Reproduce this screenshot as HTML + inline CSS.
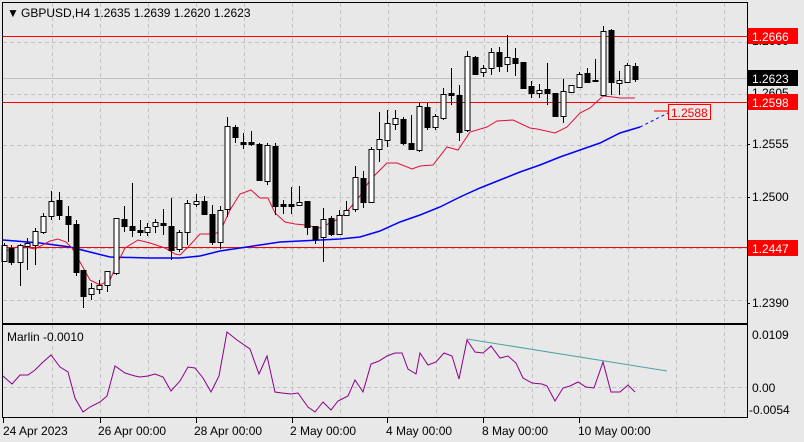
<!DOCTYPE html>
<html><head><meta charset="utf-8"><style>
html,body{margin:0;padding:0;background:#e8e8e8;}
svg{display:block;font-family:"Liberation Sans",sans-serif;}
</style></head><body>
<svg id="s" width="804" height="442" xmlns="http://www.w3.org/2000/svg">
<rect width="804" height="442" fill="#e8e8e8"/>
<g id="grid" stroke="#c4c4c4" stroke-dasharray="4,3" stroke-width="1"></g>
<line x1="3" y1="78.5" x2="747" y2="78.5" stroke="#c0c0c0"/>
<line x1="3" y1="36.5" x2="747" y2="36.5" stroke="#ff0000"/>
<line x1="3" y1="102.5" x2="747" y2="102.5" stroke="#ff0000"/>
<line x1="3" y1="247.5" x2="747" y2="247.5" stroke="#ff0000"/>
<polyline fill="none" stroke="#0000ff" stroke-width="1.5" points="3,240 40,243 70,247 90,252 110,257 150,258 180,258 200,256 220,251 240,248 260,245 280,242 300,241 320,240 340,239 360,237 380,231 400,222 420,215 440,207 460,197 480,188 500,180 520,172 540,165 560,157 580,150 600,143 620,133 640,127"/>
<polyline fill="none" stroke="#0000ff" stroke-width="1" stroke-dasharray="3,3" points="640,127 668,113"/>
<polyline fill="none" stroke="#e0103a" stroke-width="1" points="3,252 20,246 35,249 50,241 58,239 66,242 72,248 80,262 90,280 100,285 110,280 118,262 125,248 138,240 150,243 165,248 175,254 180,255 190,245 200,234 213,234 220,232 230,210 240,194 251,190 260,198 268,198 275,213 285,222 295,224 305,225 315,227 320,228 330,223 340,218 350,208 360,196 370,180 380,170 387,163 397,163 412,169 420,166 433,165 447,147 458,150 470,132 487,127 497,121 513,120 530,128 537,129 555,133 567,127 580,113 590,108 603,96 613,97 620,98 635,98"/>
<g id="c"></g>
<polyline fill="none" stroke="#ff0000" points="654,111 668,111"/>
<rect x="668.5" y="104.5" width="42" height="15" fill="#e8e8e8" stroke="#ff0000"/>
<text x="671" y="117" font-size="12" fill="#ff0000">1.2588</text>
<rect x="2.5" y="2.5" width="745" height="321" fill="none" stroke="#000"/>
<text x="7" y="17" font-size="12">&#9660;</text>
<text x="21" y="17" font-size="12" fill="#000">GBPUSD,H4  1.2635 1.2639 1.2620 1.2623</text>
<g font-size="12" fill="#000">
<text x="752" y="97">1.2605</text>
<text x="752" y="45">1.2660</text>
<text x="752" y="148">1.2555</text>
<text x="752" y="201">1.2500</text>
<text x="752" y="307">1.2390</text>
</g>
<rect x="748" y="28" width="50" height="16" fill="#ff0000"/>
<text x="752" y="41" font-size="12" fill="#fff">1.2666</text>
<rect x="748" y="70" width="50" height="16" fill="#000"/>
<text x="752" y="83" font-size="12" fill="#fff">1.2623</text>
<rect x="748" y="94" width="50" height="16" fill="#ff0000"/>
<text x="752" y="107" font-size="12" fill="#fff">1.2598</text>
<rect x="748" y="240" width="50" height="16" fill="#ff0000"/>
<text x="752" y="253" font-size="12" fill="#fff">1.2447</text>
<g stroke="#000"><line x1="747" y1="144.5" x2="750" y2="144.5"/><line x1="747" y1="197.5" x2="750" y2="197.5"/><line x1="747" y1="303.5" x2="750" y2="303.5"/></g>
<line x1="3" y1="387.5" x2="747" y2="387.5" stroke="#c4c4c4" stroke-dasharray="4,3"/>
<polyline fill="none" stroke="#4aa3a0" stroke-width="1" points="467,339 667,371"/>
<polyline fill="none" stroke="#8b008b" stroke-width="1" points="3,376 12,384 20,375 28,375 35,370 42,363 51,355 60,367 68,372 75,398 83,412 90,407 100,402 107,396 115,366 125,373 135,376 140,377 148,376 155,374 163,377 171,391 180,381 188,367 195,368 203,378 211,392 219,376 227,332 237,340 250,349 259,374 267,356 275,392 282,393 291,394 298,393 308,407 315,412 323,402 331,410 338,401 348,396 355,380 363,392 371,364 379,361 387,356 395,353 402,353 408,369 416,374 420,353 428,365 436,362 444,353 452,356 459,379 467,340 475,352 483,353 491,346 500,358 508,356 516,363 523,378 532,383 542,384 547,386 555,401 563,388 570,386 578,382 586,387 594,388 603,362 611,392 620,392 628,385 635,392"/>
<rect x="2.5" y="324.5" width="745" height="93" fill="none" stroke="#000"/>
<text x="7" y="341" font-size="12">Marlin -0.0010</text>
<g font-size="12"><text x="752" y="339">0.0109</text><text x="752" y="392">0.00</text><text x="749" y="414">-0.0054</text></g>
<g font-size="12" id="dates"></g>
</svg>
<script>
var NS="http://www.w3.org/2000/svg";
function el(p,t,a){var e=document.createElementNS(NS,t);for(var k in a)e.setAttribute(k,a[k]);p.appendChild(e);return e;}
var g=document.getElementById("grid");
for(var x=52;x<747;x+=48){el(g,"line",{x1:x+.5,y1:3,x2:x+.5,y2:323});el(g,"line",{x1:x+.5,y1:325,x2:x+.5,y2:417});}
[42,93.5,145,196.5,248,299.5].forEach(function(y){el(g,"line",{x1:3,y1:Math.round(y)+.5,x2:747,y2:Math.round(y)+.5});});
// x, wickTop, wickBot, bodyTop, bodyBot, bull
var C=[[4,243,262,245,261,1],[11,245,265,248,262,0],[20,244,286,245,262,1],[27,238,270,243,246,1],[35,228,265,231,245,1],[43,213,234,216,232,1],[51,191,220,201,216,1],[59,192,220,200,215,0],[68,206,242,216,224,0],[76,220,276,224,272,0],[83,270,308,270,296,0],[91,283,300,288,294,1],[99,280,294,285,289,1],[107,271,292,271,285,1],[116,218,275,218,273,1],[124,206,232,219,226,0],[132,183,237,226,230,0],[140,220,236,230,232,0],[147,223,236,227,232,1],[155,219,233,222,226,1],[163,209,235,223,225,0],[171,198,260,226,250,0],[179,230,252,232,249,1],[187,200,245,203,232,1],[196,194,207,201,204,1],[204,196,215,201,214,0],[212,205,245,214,242,0],[220,206,249,210,242,1],[227,117,217,126,209,1],[235,125,143,127,137,0],[243,133,149,142,144,0],[251,131,146,142,144,0],[259,143,181,144,180,0],[267,143,185,145,181,1],[275,143,215,146,206,0],[283,200,214,204,206,0],[291,187,214,204,206,0],[299,186,205,202,205,1],[307,201,235,201,227,0],[315,226,244,226,239,0],[323,208,262,219,237,1],[331,216,236,218,234,0],[339,210,235,215,234,1],[346,201,216,210,215,1],[355,166,212,177,209,1],[363,171,208,178,202,0],[371,147,203,149,202,1],[379,112,162,139,149,1],[387,110,147,123,140,1],[395,110,130,118,124,1],[403,117,145,119,143,0],[411,115,150,143,149,0],[419,103,152,106,150,1],[427,103,130,107,127,0],[435,114,130,116,127,1],[443,88,120,94,118,1],[451,68,105,93,95,0],[459,85,141,95,132,0],[467,51,132,56,130,1],[475,56,75,57,74,0],[483,65,77,68,72,1],[491,48,75,52,68,1],[499,47,72,52,66,0],[507,35,72,57,64,1],[515,48,76,58,63,0],[523,62,89,62,88,0],[531,81,98,86,93,0],[539,84,98,90,93,1],[547,63,105,89,93,0],[555,93,117,93,116,0],[563,79,123,91,116,1],[571,85,92,85,92,1],[579,72,87,74,87,1],[587,68,83,73,82,0],[595,59,82,80,81,0],[603,26,95,31,95,1],[611,29,95,30,82,0],[619,71,95,80,83,1],[627,63,83,65,82,1],[635,63,82,66,79,0]];
var c=document.getElementById("c");
C.forEach(function(d){var x=d[0];el(c,"line",{x1:x+.5,y1:d[1],x2:x+.5,y2:d[2],stroke:"#000"});
var h=Math.max(d[4]-d[3],1);
el(c,"rect",{x:x-2,y:d[3]+.5,width:5,height:h,fill:d[5]?"#fff":"#000",stroke:"#000","stroke-width":1});});
var D=document.getElementById("dates");
[[3,"24 Apr 2023"],[98,"26 Apr 00:00"],[194,"28 Apr 00:00"],[290,"2 May 00:00"],[386,"4 May 00:00"],[482,"8 May 00:00"],[578,"10 May 00:00"]].forEach(function(d,i){
var tx=el(D,"text",{x:d[0],y:435});tx.textContent=d[1];
el(D,"line",{x1:[3,100,196,292,387,483,579][i]+.5,y1:418,x2:[3,100,196,292,387,483,579][i]+.5,y2:423,stroke:"#000"});});
</script>
</body></html>
